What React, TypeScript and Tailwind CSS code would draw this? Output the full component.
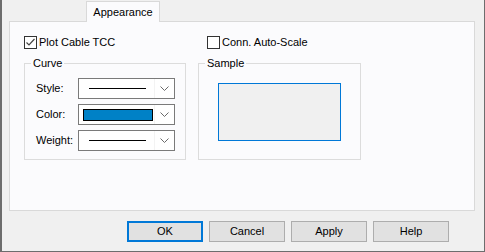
import React from 'react';

const font = { fontFamily: '"Liberation Sans", Arial, sans-serif' };

const Checkbox: React.FC<{ label: string; checked?: boolean }> = ({ label, checked }) => (
  <label className="flex items-center h-[13px] text-[11px] leading-[13px] text-black">
    <span className="w-[13px] h-[13px] border border-[#333333] bg-white flex items-center justify-center shrink-0">
      {checked && (
        <svg width="11" height="11" viewBox="0 0 11 11">
          <path d="M1.5 5.5 L4 8 L9.5 2" fill="none" stroke="#444444" strokeWidth="1.2" />
        </svg>
      )}
    </span>
    <span className="ml-[2px] whitespace-nowrap">{label}</span>
  </label>
);

const Chevron = () => (
  <svg width="9" height="5" viewBox="0 0 9 5">
    <path d="M0.5 0.5 L4.5 4.5 L8.5 0.5" fill="none" stroke="#6a6a6a" strokeWidth="1" />
  </svg>
);

const Combo: React.FC<{ children: React.ReactNode }> = ({ children }) => (
  <div className="w-[97px] h-[21px] border border-[#7a7a7a] bg-white flex">
    <div className="w-[75px] flex items-center pl-[4px]">{children}</div>
    <div className="w-[1px] bg-[#f3f3f3]" />
    <div className="flex-1 flex items-center justify-center">
      <Chevron />
    </div>
  </div>
);

const Button: React.FC<{ label: string; primary?: boolean }> = ({ label, primary }) => (
  <button
    className={
      primary
        ? 'w-[76px] h-[21px] border-2 border-[#0078d7] bg-[#e1e1e1] text-[11px] text-black flex items-center justify-center'
        : 'w-[76px] h-[21px] border border-[#adadad] bg-[#e1e1e1] text-[11px] text-black flex items-center justify-center'
    }
  >
    {label}
  </button>
);

export default function App() {
  return (
    <div
      className="w-[485px] h-[252px] bg-[#f0f0f0] border-l-2 border-r border-b border-[#6d6d6d] flex flex-col"
      style={font}
    >
      {/* Tab strip */}
      <div className="pt-[1px] pl-[84px] flex">
        <div className="relative z-10 w-[74px] h-[21px] bg-[#fbfbfd] border-t border-l border-r border-[#d9d9d9] flex items-center justify-center text-[11px] text-black">
          Appearance
        </div>
      </div>

      {/* Tab page */}
      <div className="ml-[7px] -mt-[1px] w-[466px] h-[190px] border border-[#d9d9d9] bg-[#fbfbfd] pl-[14px] pt-[14px]">
        <div className="grid grid-cols-[162px_163px] gap-x-[12px]">
          <Checkbox label="Plot Cable TCC" checked />
          <div className="pl-[9px]">
            <Checkbox label="Conn. Auto-Scale" />
          </div>
        </div>

        <div className="grid grid-cols-[162px_163px] gap-x-[12px] mt-[8px]">
          <fieldset className="border border-[#dcdcdc]">
            <legend className="ml-[6px] px-[2px] text-[11px] leading-[13px] text-black">Curve</legend>
            <div className="pl-[11px] pt-[8px] pb-[8px] grid grid-cols-[42px_97px] gap-y-[5px] items-center text-[11px] text-black">
              <span>Style:</span>
              <Combo>
                <div className="ml-[6px] w-[57px] h-[1px] bg-black" />
              </Combo>
              <span>Color:</span>
              <Combo>
                <div className="w-[70px] h-[12px] border border-black bg-[#0081c6]" />
              </Combo>
              <span>Weight:</span>
              <Combo>
                <div className="ml-[6px] w-[57px] h-[1px] bg-black" />
              </Combo>
            </div>
          </fieldset>

          <fieldset className="border border-[#dcdcdc]">
            <legend className="ml-[6px] px-[2px] text-[11px] leading-[13px] text-black">Sample</legend>
            <div className="pl-[19px] pt-[13px]">
              <div className="w-[123px] h-[58px] border border-[#0078d7] bg-[#f0f0f0]" />
            </div>
          </fieldset>
        </div>
      </div>

      {/* Dialog buttons */}
      <div className="mt-[10px] pl-[125px] flex gap-[6px]">
        <Button label="OK" primary />
        <Button label="Cancel" />
        <Button label="Apply" />
        <Button label="Help" />
      </div>
    </div>
  );
}
